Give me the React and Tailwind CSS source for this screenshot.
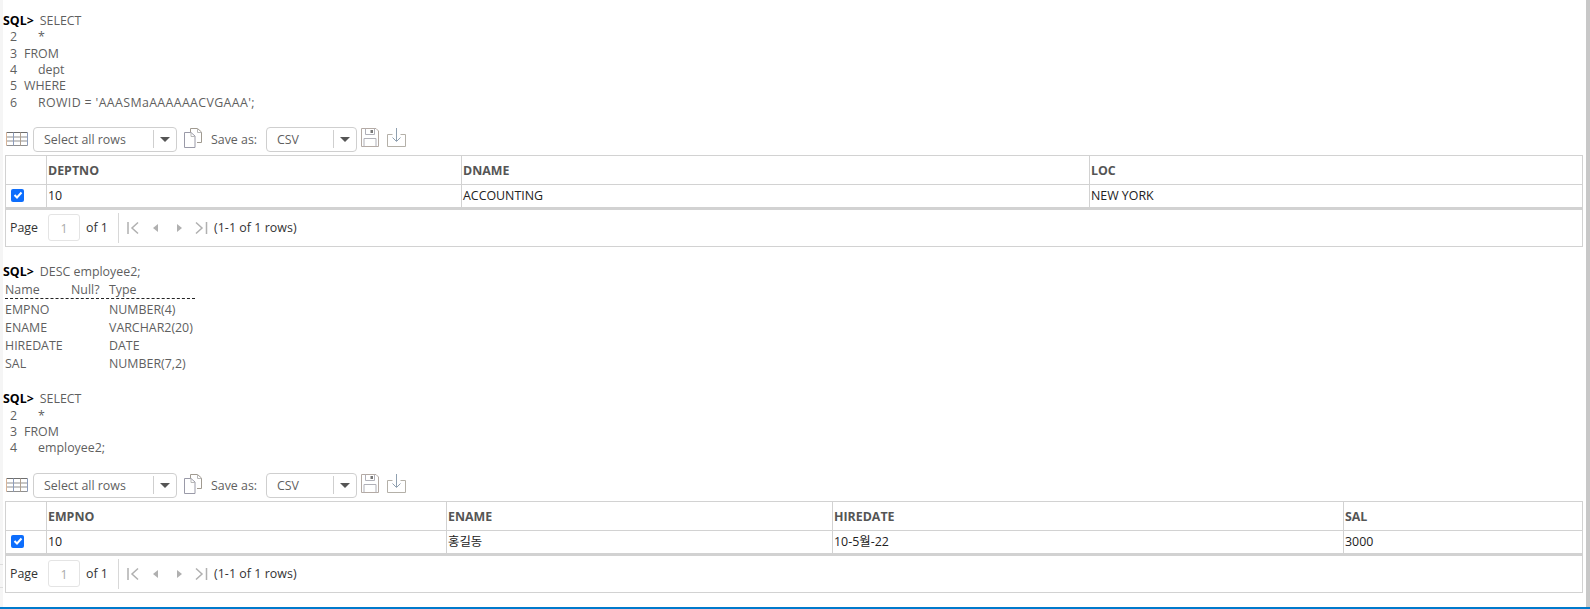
import React from 'react';

const TableIcon = () => (
  <svg width="22" height="14" viewBox="0 0 22 14" fill="none" className="shrink-0">
    <path d="M0.5 0.5H21.5" stroke="#6e6e6e" />
    <path d="M0.5 13.5H21.5M0.5 5H21.5M0.5 9H21.5" stroke="#8f8f8f" />
    <path d="M0.5 0.5V13.5" stroke="#d8b498" />
    <path d="M7.5 0.5V13.5" stroke="#8c9cbc" />
    <path d="M14.5 0.5V13.5" stroke="#b0a090" />
    <path d="M21.5 0.5V13.5" stroke="#8c9cbc" />
  </svg>
);

const CopyIcon = () => (
  <svg width="20" height="20" viewBox="0 0 20 20" fill="none" className="shrink-0">
    <path d="M7.5 4V0.5H14.5L18.5 4V14.5H14" stroke="#a09a90" />
    <path d="M14.5 0.5V4.5H18.5" stroke="#b8b8b8" />
    <path d="M1.5 4.5H8L12 8V19.5H1.5Z" fill="#fff" stroke="#9a9aa8" />
    <path d="M8 4.5V8.5H12" stroke="#b8b8b8" />
  </svg>
);

const SaveIcon = () => (
  <svg width="18" height="20" viewBox="0 0 18 20" fill="none" className="shrink-0">
    <path d="M0.5 0.5H15L17.5 3V18.5H0.5Z" stroke="#b4aaa4" />
    <path d="M4.5 0.5V6.5H13.5V0.5M3 18.5V10.5H15V18.5" stroke="#b0b0b8" />
    <rect x="9.5" y="2" width="2.5" height="3" fill="#777" />
  </svg>
);

const DownloadIcon = () => (
  <svg width="19" height="20" viewBox="0 0 19 20" fill="none" className="shrink-0">
    <path d="M5.5 6.5H0.5V18.5H18.5V6.5H13.5" stroke="#b4b0a8" />
    <path d="M9.5 0V13M5.5 9.5L9.5 13.5L13.5 9.5" stroke="#8fa0b0" />
  </svg>
);

const Select = ({ label, width, textWidth }) => (
  <div className={`flex items-center h-[25px] border border-[#cfcfcf] rounded-[4px] bg-white ${width}`}>
    <span className={`pl-[10px] pt-[1px] text-[12.4px] text-[#5f5f5f] ${textWidth}`}>{label}</span>
    <div className="w-px h-[18px] bg-[#cfcfcf]" />
    <div className="flex-1 flex justify-center">
      <div className="w-0 h-0 border-l-[5px] border-r-[5px] border-t-[5px] border-l-transparent border-r-transparent border-t-[#555]" />
    </div>
  </div>
);

const Toolbar = () => (
  <div className="flex items-center h-[25px] pl-[3px]">
    <div className="w-[27px] pb-[1px]"><TableIcon /></div>
    <Select label="Select all rows" width="w-[144px]" textWidth="w-[119px]" />
    <div className="ml-[6px] w-[28px] pb-[3px]"><CopyIcon /></div>
    <span className="pt-[1px] text-[12.4px] text-[#5f5f5f] w-[55px]">Save as:</span>
    <Select label="CSV" width="w-[91px]" textWidth="w-[66px]" />
    <div className="ml-[4px] w-[26px] pb-[2px]"><SaveIcon /></div>
    <div className="pb-[2px]"><DownloadIcon /></div>
  </div>
);

const Pager = () => (
  <div className="flex items-center h-[37px] border border-[#d2d2d2] border-t-0 text-[12.4px] text-[#333]">
    <span className="pl-[4px] pt-[1px] w-[42px]">Page</span>
    <div className="w-[32px] h-[27px] border border-[#e4e4e4] rounded-[3px] flex items-center justify-center pt-[2px] text-[#aaa]">1</div>
    <span className="pl-[6px] pt-[1px] w-[38px]">of 1</span>
    <div className="w-px h-[30px] bg-[#d8d8d8]" />
    <svg width="82" height="14" viewBox="0 0 82 14" fill="none" className="ml-[8px] shrink-0">
      <path d="M1 1V13M11 1.5L5 7L11 12.5" stroke="#b0b0b0" strokeWidth="1.5" />
      <path d="M31 3L26 7L31 11Z" fill="#b0b0b0" />
      <path d="M50 3L55 7L50 11Z" fill="#b0b0b0" />
      <path d="M69 1.5L75 7L69 12.5M79.5 1V13" stroke="#b0b0b0" strokeWidth="1.5" />
    </svg>
    <span className="ml-[5px] pt-[1px] tracking-[0.05px]">(1-1 of 1 rows)</span>
  </div>
);

const ResultTable = ({ columns, row }) => (
  <div className="ml-[2px] mr-[3px] mt-[3px]">
    <div className="border border-[#d2d2d2] border-b-0">
      <div className="flex h-[29px] border-b border-[#d2d2d2]">
        <div className="w-[41px] shrink-0 border-r border-[#d2d2d2]" />
        {columns.map((c, i) => (
          <div
            key={c.name}
            className={`${c.width} ${i < columns.length - 1 ? 'border-r border-[#d2d2d2]' : ''} pl-[1px] pt-[2px] flex items-center text-[12.4px] font-bold text-[#555]`}
          >
            {c.name}
          </div>
        ))}
      </div>
      <div className="flex h-[22px]">
        <div className="w-[41px] shrink-0 border-r border-[#d2d2d2] flex items-center pl-[5px]">
          <div className="w-[13px] h-[13px] mb-[1px] rounded-[2px] bg-[#0d6efd] flex items-center justify-center">
            <svg width="10" height="10" viewBox="0 0 10 10" fill="none">
              <path d="M1.5 5L4 7.5L8.5 2.5" stroke="#fff" strokeWidth="2" />
            </svg>
          </div>
        </div>
        {columns.map((c, i) => (
          <div
            key={c.name}
            className={`${c.width} ${i < columns.length - 1 ? 'border-r border-[#d2d2d2]' : ''} pl-[1px] pt-[1px] flex items-center text-[12.4px] text-[#222]`}
          >
            {row[i]}
          </div>
        ))}
      </div>
    </div>
    <div className="h-[3px] bg-[#d2d2d2]" />
    <Pager />
  </div>
);

const Prompt = ({ children }) => (
  <div className="h-[16.4px] flex items-center whitespace-pre text-[#5f5f5f]">
    <b className="text-black font-bold">SQL&gt;</b>
    <span className="ml-[6px]">{children}</span>
  </div>
);

const Line = ({ n, indent, wide, children }) => (
  <div className="h-[16.4px] flex items-center whitespace-pre text-[#5f5f5f]">
    <span className="w-[21px] pl-[7px]">{n}</span>
    {indent && <span className="w-[14px]" />}
    <span className={wide ? 'tracking-[0.36px]' : ''}>{children}</span>
  </div>
);

const DescRow = ({ name, nul, type, className = '' }) => (
  <div className={`h-[18px] flex items-center pl-[2px] text-[#5f5f5f] ${className}`}>
    <span className="w-[66px]">{name}</span>
    <span className="w-[38px]">{nul}</span>
    <span>{type}</span>
  </div>
);

export default function App() {
  return (
    <div
      className="flex h-[609px] overflow-hidden bg-white text-[12.4px] border-b-[2px] border-[#007acc]"
      style={{ fontFamily: '"Open Sans", "Noto Sans CJK KR", sans-serif' }}
    >
      {/* left gutter of the notebook */}
      <div className="w-[3px] shrink-0 bg-[#f5f5f5] pt-[564px]">
        <div className="h-px bg-[#dddddd]" />
        <div className="h-px mt-[22px] bg-[#dddddd]" />
      </div>
      <div className="flex-1 min-w-0 pt-[13px]">
        <div>
          <Prompt>SELECT</Prompt>
          <Line n="2" indent>*</Line>
          <Line n="3">FROM</Line>
          <Line n="4" indent>dept</Line>
          <Line n="5">WHERE</Line>
          <Line n="6" indent wide>{"ROWID = 'AAASMaAAAAAACVGAAA';"}</Line>
        </div>
        <div className="mt-[15.6px]">
          <Toolbar />
          <ResultTable
            columns={[
              { name: 'DEPTNO', width: 'w-[415px]' },
              { name: 'DNAME', width: 'w-[628px]' },
              { name: 'LOC', width: 'flex-1' },
            ]}
            row={['10', 'ACCOUNTING', 'NEW YORK']}
          />
        </div>
        <div className="mt-[17px]">
          <Prompt>DESC employee2;</Prompt>
          <DescRow name="Name" nul="Null?" type="Type" className="pt-[1px]" />
          <div className="ml-[2px] w-[190px] border-t border-dashed border-[#222]" />
          <div className="mt-[2px]">
            <DescRow name="EMPNO" type="NUMBER(4)" />
            <DescRow name="ENAME" type="VARCHAR2(20)" />
            <DescRow name="HIREDATE" type="DATE" />
            <DescRow name="SAL" type="NUMBER(7,2)" />
          </div>
        </div>
        <div className="mt-[18px]">
          <Prompt>SELECT</Prompt>
          <Line n="2" indent>*</Line>
          <Line n="3">FROM</Line>
          <Line n="4" indent>employee2;</Line>
        </div>
        <div className="mt-[16px]">
          <Toolbar />
          <ResultTable
            columns={[
              { name: 'EMPNO', width: 'w-[400px]' },
              { name: 'ENAME', width: 'w-[386px]' },
              { name: 'HIREDATE', width: 'w-[511px]' },
              { name: 'SAL', width: 'flex-1' },
            ]}
            row={['10', '홍길동', '10-5월-22', '3000']}
          />
        </div>
      </div>
      <div className="w-[4px] shrink-0 bg-[#c8c8c8]" />
    </div>
  );
}
